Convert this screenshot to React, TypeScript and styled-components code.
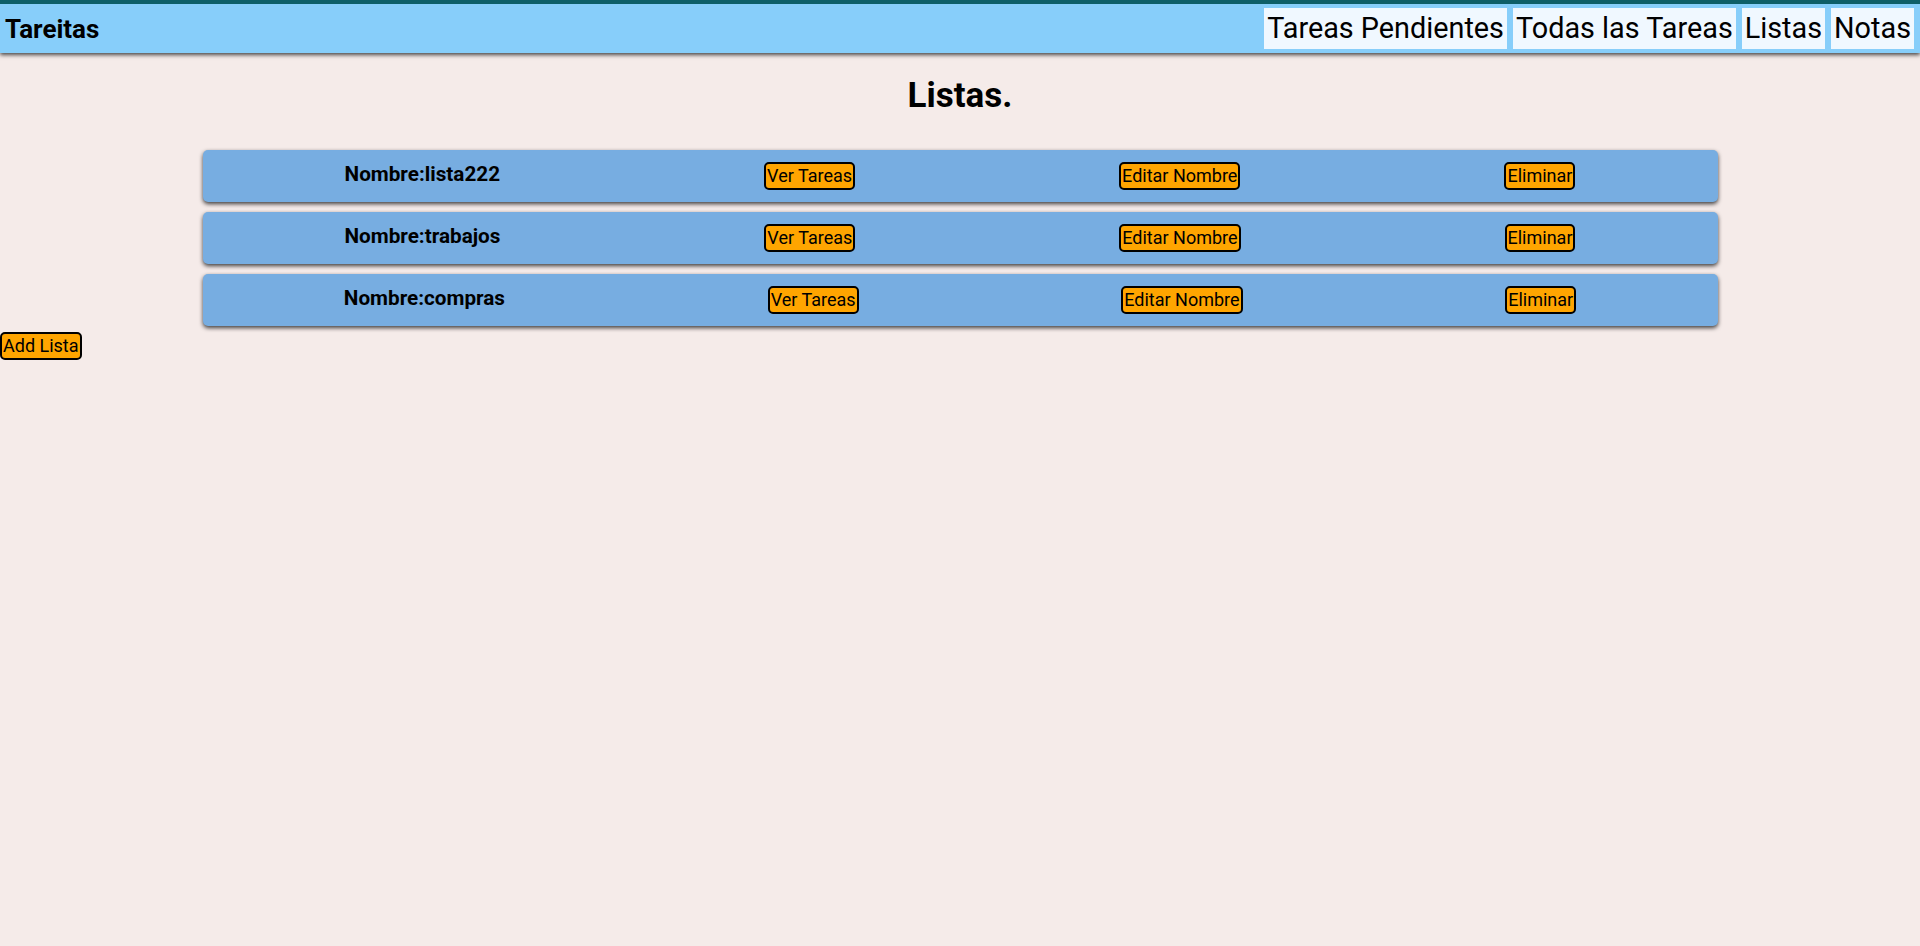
import styled, { createGlobalStyle } from "styled-components";

const lists = [
  { id: 1, name: "lista222" },
  { id: 2, name: "trabajos" },
  { id: 3, name: "compras" },
];

const links = ["Tareas Pendientes", "Todas las Tareas", "Listas", "Notas"];

const App: React.FC = () => {
  return (
    <>
      <GlobalStyle />
      <NavBar>
        <Brand>Tareitas</Brand>
        <NavLinks>
          {links.map((link) => (
            <NavLink key={link} href="#">
              {link}
            </NavLink>
          ))}
        </NavLinks>
      </NavBar>
      <Title>Listas.</Title>
      <ListWrapper>
        {lists.map((list) => (
          <ListCard key={list.id}>
            <ListName>{`Nombre:${list.name}`}</ListName>
            <ActionButton>Ver Tareas</ActionButton>
            <ActionButton>Editar Nombre</ActionButton>
            <ActionButton>Eliminar</ActionButton>
          </ListCard>
        ))}
      </ListWrapper>
      <ActionButton>Add Lista</ActionButton>
    </>
  );
};
export default App;

const GlobalStyle = createGlobalStyle`
  html, body {
    margin: 0;
    padding: 0;
    min-height: 100%;
    background-color: #f5ebe9;
  }
  body {
    font-family: Roboto, "Liberation Sans", sans-serif;
    color: #000;
  }
`;

const NavBar = styled.nav`
  display: flex;
  align-items: center;
  justify-content: space-between;
  height: 49px;
  padding: 0 6px 0 5px;
  border-top: 4px solid #0e5f68;
  background-color: #87cefa;
  box-shadow: 0 2px 4px rgba(0, 0, 0, 0.7);
`;

const Brand = styled.span`
  font-size: 26px;
  font-weight: 700;
`;

const NavLinks = styled.div`
  display: flex;
  gap: 6px;
`;

const NavLink = styled.a`
  display: block;
  padding: 3px 3px;
  line-height: 35px;
  font-size: 28.8px;
  color: #000;
  text-decoration: none;
  background-color: #f0f8ff;
`;

const Title = styled.h1`
  margin: 23px 0 34px;
  line-height: 40px;
  font-size: 35px;
  font-weight: 700;
  text-align: center;
`;

const ListWrapper = styled.div`
  display: flex;
  flex-direction: column;
  gap: 10px;
  width: 1515px;
  margin: 0 auto 6px;
`;

const ListCard = styled.div`
  display: flex;
  align-items: center;
  justify-content: space-around;
  height: 52px;
  padding: 0 10px;
  border-radius: 5px;
  background-color: #77ade1;
  box-shadow: 0 2px 4px rgba(0, 0, 0, 0.75);
`;

const ListName = styled.span`
  margin-bottom: 4px;
  font-size: 20.7px;
  font-weight: 700;
`;

const ActionButton = styled.button`
  padding: 1px 1px;
  line-height: 22px;
  font-family: Roboto, "Liberation Sans", sans-serif;
  font-size: 18px;
  color: #000;
  background-color: #ffa500;
  border: 2px solid #000;
  border-radius: 5px;
  cursor: pointer;
`;
